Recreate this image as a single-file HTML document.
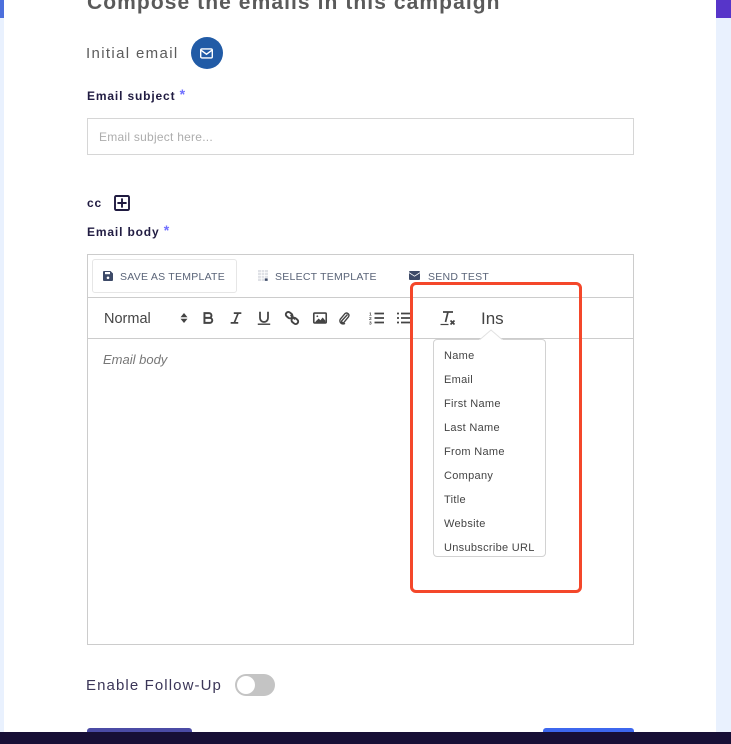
<!DOCTYPE html>
<html>
<head>
<meta charset="utf-8">
<style>
html,body{margin:0;padding:0;background:#fff}
body{width:731px;height:744px;position:relative;overflow:hidden;font-family:"Liberation Sans",sans-serif}
.a{position:absolute;white-space:nowrap}
.item{position:absolute;left:444px;font-size:11px;letter-spacing:.3px;color:#444;line-height:14px;white-space:nowrap}
.tb{font-size:10.5px;letter-spacing:.25px;color:#5a6478;line-height:14px}
.lb{font-size:12px;font-weight:bold;color:#211c42;letter-spacing:.85px;line-height:16px}
.st{color:#6f6fff;font-size:14px;font-weight:bold;position:relative;top:-1px;letter-spacing:0}
svg{position:absolute;display:block}
</style>
</head>
<body>
<div class="a" style="left:0;top:0;width:4px;height:744px;background:#e9f1fe"></div>
<div class="a" style="left:0;top:0;width:4px;height:18px;background:#4c6fdc"></div>
<div class="a" style="left:716px;top:0;width:15px;height:744px;background:#e9f1fe"></div>
<div class="a" style="left:716px;top:0;width:15px;height:18px;background:#5735c9"></div>

<div class="a" style="left:87px;top:-9px;font-size:21px;line-height:24px;font-weight:bold;color:#5a5a5a;letter-spacing:1.08px">Compose the emails in this campaign</div>

<div class="a" style="left:86px;top:45px;font-size:15px;line-height:18px;color:#5c5c5c;letter-spacing:1.35px">Initial email</div>
<div class="a" style="left:191px;top:37px;width:32px;height:32px;border-radius:50%;background:#215ba6"></div>
<svg style="left:200px;top:48px" width="13" height="11" viewBox="0 0 13 11" fill="none" stroke="#fff" stroke-width="1.4"><rect x=".7" y=".9" width="11.6" height="9" rx="1.2"/><path d="M1 2.2l5.5 4 5.5-4"/></svg>

<div class="a lb" style="left:87px;top:87px">Email subject <span class="st">*</span></div>
<div class="a" style="left:87px;top:118px;width:545px;height:35px;border:1px solid #d6d6d6"></div>
<div class="a" style="left:99px;top:130px;font-size:12px;line-height:15px;color:#adadad;letter-spacing:.25px">Email subject here...</div>

<div class="a lb" style="left:87px;top:195px">cc</div>
<svg style="left:114px;top:195px" width="16" height="16" viewBox="0 0 16 16" fill="none" stroke="#1f1a40" stroke-width="1.9"><rect x="1" y="1" width="14" height="14" rx="1.2"/><path d="M8 3.4v9.2M3.4 8h9.2"/></svg>
<div class="a lb" style="left:87px;top:223px">Email body <span class="st">*</span></div>

<div class="a" style="left:87px;top:254px;width:545px;height:389px;border:1px solid #ccc"></div>
<div class="a" style="left:88px;top:297px;width:545px;height:1px;background:#ccc"></div>
<div class="a" style="left:88px;top:338px;width:545px;height:1px;background:#ccc"></div>

<div class="a" style="left:92px;top:259px;width:143px;height:32px;border:1px solid #e6e6e6;border-radius:3px"></div>
<svg style="left:103px;top:271px" width="10" height="10" viewBox="0 0 10 10"><path d="M1 0h6.5L10 2.5V9a1 1 0 0 1-1 1H1a1 1 0 0 1-1-1V1a1 1 0 0 1 1-1z" fill="#3d4a68"/><rect x="2" y="1" width="5" height="2.2" fill="#fff"/><circle cx="5" cy="6.8" r="1.3" fill="#fff"/></svg>
<div class="a tb" style="left:120px;top:270px">SAVE AS TEMPLATE</div>
<svg style="left:258px;top:270px" width="10" height="11" viewBox="0 0 10 11"><rect width="10" height="11" fill="#dfe1e6"/><path d="M3.3 0v11M6.6 0v11M0 2.7h10M0 5.5h10M0 8.2h10" stroke="#fff" stroke-width=".7"/><rect x="6.8" y="8.4" width="2.8" height="2.4" fill="#3d4a68"/></svg>
<div class="a tb" style="left:275px;top:270px">SELECT TEMPLATE</div>
<svg style="left:409px;top:271px" width="11" height="9" viewBox="0 0 11 9"><rect width="11" height="9" rx="1" fill="#3d4a68"/><path d="M0 1.6l5.5 3.6L11 1.6" fill="none" stroke="#fff" stroke-width=".8"/></svg>
<div class="a tb" style="left:428px;top:270px">SEND TEST</div>

<div class="a" style="left:104px;top:311px;font-size:14.5px;line-height:16px;color:#444">Normal</div>
<svg style="left:180px;top:313px" width="8" height="10" viewBox="0 0 8 10" fill="#444"><path d="M4 0l3.5 4.2H.5zM4 10L.5 5.8h7z"/></svg>
<svg style="left:200px;top:310px" width="16" height="16" viewBox="0 0 18 18" fill="none" stroke="#444" stroke-width="2.2"><path d="M5 3.5h5.2a2.7 2.7 0 0 1 0 5.4H5zM5 8.9h6a2.8 2.8 0 0 1 0 5.6H5z"/></svg>
<svg style="left:228px;top:310px" width="16" height="16" viewBox="0 0 18 18" fill="none" stroke="#444" stroke-width="1.9"><path d="M6.5 3.5H15M3 14.5h8.5M11.5 3.5L7 14.5"/></svg>
<svg style="left:256px;top:310px" width="16" height="16" viewBox="0 0 18 18" fill="none" stroke="#444" stroke-width="2"><path d="M4.5 2v7a4.5 4.5 0 0 0 9 0V2"/><path d="M2 16h14" stroke-width="1.6"/></svg>
<svg style="left:284px;top:310px" width="16" height="16" viewBox="0 0 18 18" fill="none" stroke="#444" stroke-width="2.2"><path d="M7.5 5.5l5 5"/><rect x="1.8" y="3" width="8" height="5.6" rx="2.8" transform="rotate(40 5.8 5.8)"/><rect x="8.2" y="9.4" width="8" height="5.6" rx="2.8" transform="rotate(40 12.2 12.2)"/></svg>
<svg style="left:312px;top:310px" width="16" height="16" viewBox="0 0 18 18" fill="none" stroke="#444" stroke-width="1.8"><rect x="2" y="3.5" width="14" height="11" rx="1"/><path d="M4 13l3.5-3.5 2 2 2.5-3 3 3.5V14H4z" fill="#444" stroke="none"/><circle cx="6" cy="7" r="1" fill="#444" stroke="none"/></svg>
<svg style="left:337px;top:311px" width="14" height="14" viewBox="0 0 14 14" fill="none" stroke="#444" stroke-width="1.4"><path d="M10.5 3.5L5 9.5a1.3 1.3 0 0 0 2 1.8l4.5-5.5a2.4 2.4 0 0 0-3.5-3.2L3.4 8a3.2 3.2 0 0 0 4.6 4.3"/></svg>
<svg style="left:369px;top:311px" width="15" height="14" viewBox="0 0 15 14"><path d="M5.5 2.5h9.5M5.5 7h9.5M5.5 11.5h9.5" stroke="#444" stroke-width="1.8" fill="none"/><text x="0" y="4.5" font-size="4.8" font-weight="bold" fill="#444" font-family="Liberation Sans">1</text><text x="0" y="9" font-size="4.8" font-weight="bold" fill="#444" font-family="Liberation Sans">2</text><text x="0" y="13.5" font-size="4.8" font-weight="bold" fill="#444" font-family="Liberation Sans">3</text></svg>
<svg style="left:397px;top:311px" width="14" height="14" viewBox="0 0 14 14" stroke="#444" stroke-width="1.8" fill="none"><path d="M0 2.5h2M4 2.5h10M0 7h2M4 7h10M0 11.5h2M4 11.5h10"/></svg>

<svg style="left:440px;top:310px" width="16" height="16" viewBox="0 0 16 16" fill="none" stroke="#444"><path d="M3 2h10M8 2L5.5 12" stroke-width="1.7"/><path d="M0.5 14.5h8" stroke-width="1.2"/><path d="M10.5 10.5l4 4M14.5 10.5l-4 4" stroke-width="1.7"/></svg>
<div class="a" style="left:481px;top:310px;width:22px;overflow:hidden;font-size:17px;line-height:18px;color:#444">Insert</div>

<div class="a" style="left:433px;top:339px;width:111px;height:216px;border:1px solid #d2d2d2;border-radius:4px;background:#fff"></div>
<svg style="left:479px;top:329px" width="24" height="12" viewBox="0 0 24 12"><path d="M0 11L12 1l12 10z" fill="#fff"/><path d="M1 10.5L12 1l11 9.5" fill="none" stroke="#e2e2e2" stroke-width="1"/></svg>

<div class="item" style="top:349px">Name</div>
<div class="item" style="top:373px">Email</div>
<div class="item" style="top:397px">First Name</div>
<div class="item" style="top:421px">Last Name</div>
<div class="item" style="top:445px">From Name</div>
<div class="item" style="top:469px">Company</div>
<div class="item" style="top:493px">Title</div>
<div class="item" style="top:517px">Website</div>
<div class="item" style="top:541px">Unsubscribe URL</div>

<div class="a" style="left:103px;top:352px;font-size:13px;font-style:italic;line-height:15px;color:#777">Email body</div>

<div class="a" style="left:410px;top:282px;width:166px;height:305px;border:3px solid #f4472a;border-radius:6px"></div>

<div class="a" style="left:86px;top:677px;font-size:15px;line-height:18px;color:#3b3658;letter-spacing:1.1px">Enable Follow-Up</div>
<div class="a" style="left:235px;top:674px;width:40px;height:22px;border-radius:11px;background:#c4c4c4"></div>
<div class="a" style="left:237px;top:676px;width:18px;height:18px;border-radius:50%;background:#fff"></div>

<div class="a" style="left:87px;top:728px;width:105px;height:6px;background:#4b4ba5;border-radius:3px 3px 0 0"></div>
<div class="a" style="left:543px;top:728px;width:91px;height:6px;background:#3d67ee;border-radius:3px 3px 0 0"></div>
<div class="a" style="left:0;top:732px;width:731px;height:12px;background:#170f36"></div>
</body>
</html>
